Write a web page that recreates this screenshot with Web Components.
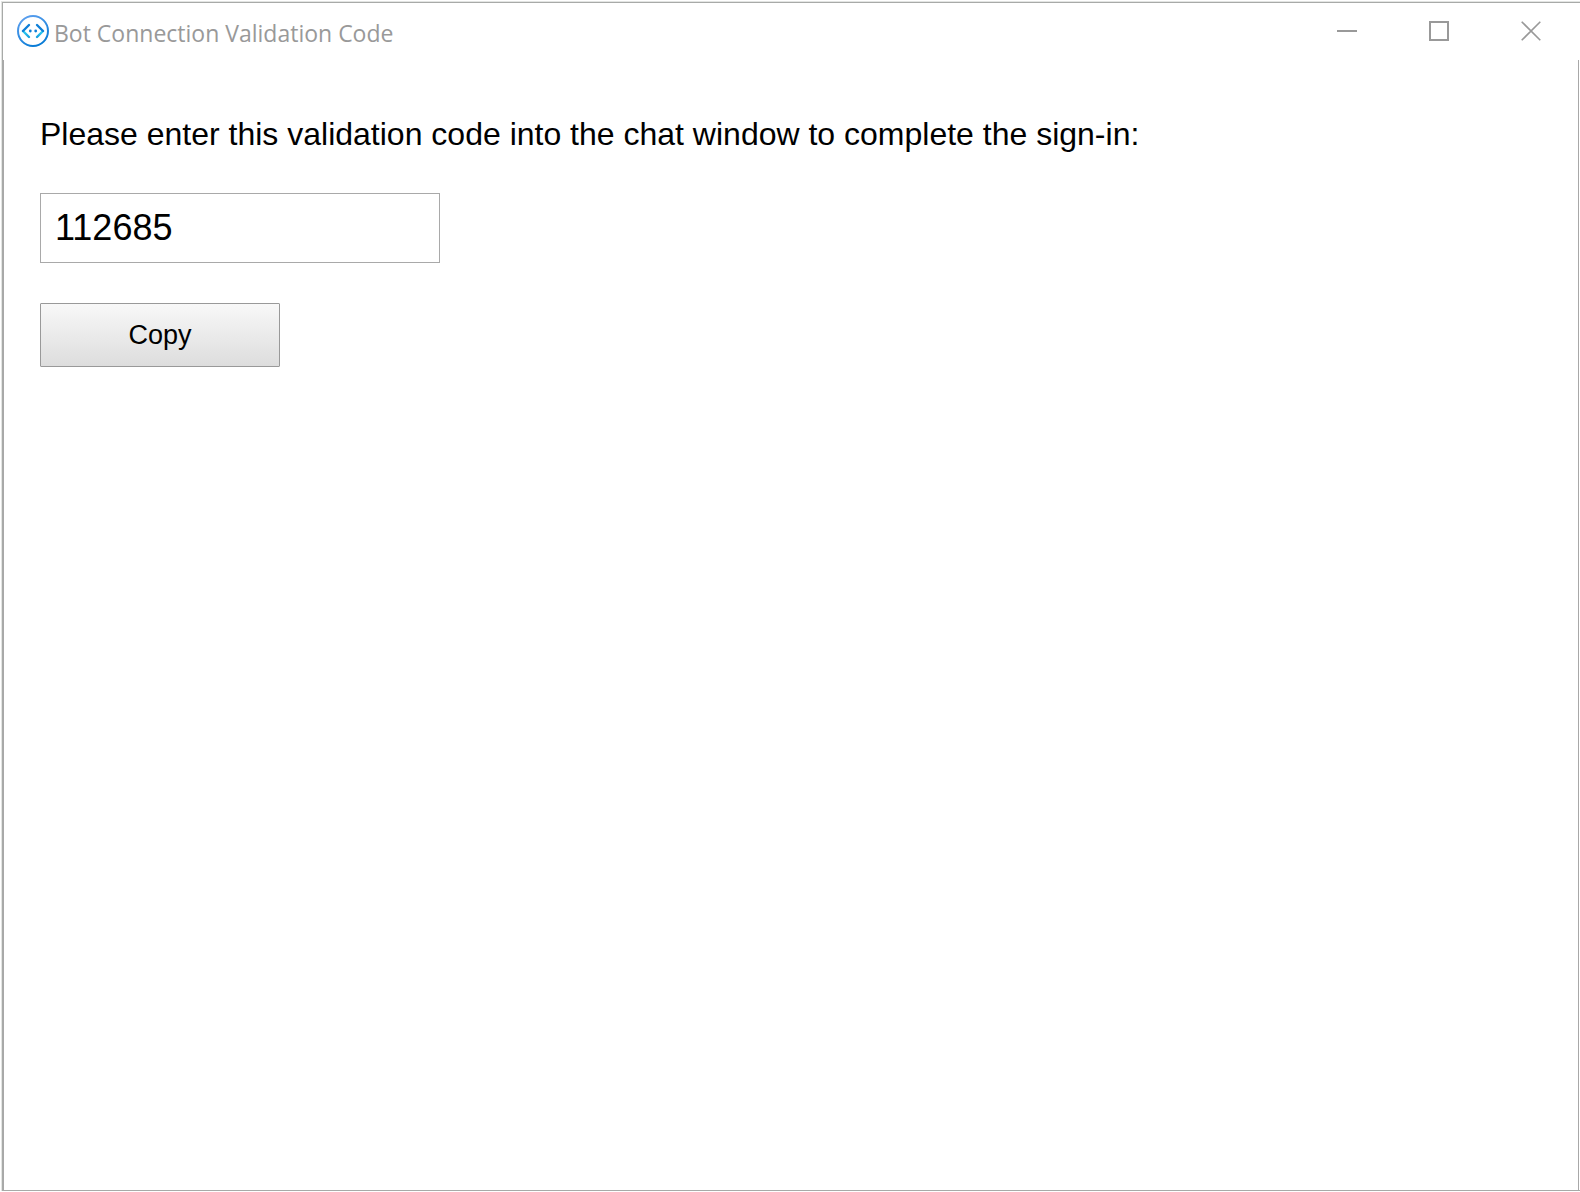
<!DOCTYPE html>
<html lang="en">
<head>
<meta charset="utf-8">
<title>Bot Connection Validation Code</title>
<style>
html, body { margin: 0; height: 100%; background: #fff; }
body { font-family: "Liberation Sans", Arial, sans-serif; color: #000; }
</style>
</head>
<body>
<app-window>
  <title-bar slot="title">Bot Connection Validation Code</title-bar>
  <validation-form code="112685">Please enter this validation code into the chat window to complete the sign-in:</validation-form>
</app-window>

<template id="app-window">
  <style>
    :host { display: flex; flex-direction: column; box-sizing: border-box; min-height: 100vh; padding: 1px 0 1px 1px; }
    .frame { flex: 1; display: flex; flex-direction: column; border: solid #e3e5e3; border-width: 1px 0 0 1px; }
    .inner { flex: 1; display: flex; flex-direction: column; border: solid #a8aaa8; border-width: 1px 0 1px 1px; }
    main { flex: 1; margin-right: 1px; border: solid #a8a8a8; border-width: 0 1px; }
  </style>
  <div class="frame"><div class="inner">
    <slot name="title"></slot>
    <main><slot></slot></main>
  </div></div>
</template>

<template id="title-bar">
  <style>
    :host { display: flex; align-items: center; height: 56px; padding: 0 3px 1px 14px; color: #999; }
    .logo { display: block; width: 32px; height: 32px; }
    h1 { flex: 1; margin: 0; padding: 3px 0 0 5px; font: 400 23px/32px "Open Sans", "Noto Sans", sans-serif; }
    nav { display: flex; height: 100%; }
    button { display: flex; align-items: center; justify-content: center; width: 92px; padding: 0; border: 0; background: none; color: inherit; }
    button svg { width: 20px; height: 20px; fill: none; stroke: currentColor; stroke-width: 2; }
  </style>
  <svg class="logo" viewBox="0 0 32 32" fill="none" aria-hidden="true">
    <defs>
      <linearGradient id="ring" x1="8" y1="0" x2="24" y2="32" gradientUnits="userSpaceOnUse"><stop stop-color="#5ea0ef"/><stop offset="1" stop-color="#0078d4"/></linearGradient>
      <linearGradient id="lower" x1="0" y1="16" x2="0" y2="23" gradientUnits="userSpaceOnUse"><stop stop-color="#32d4f5"/><stop offset="1" stop-color="#1298dd"/></linearGradient>
    </defs>
    <circle cx="16" cy="16" r="15" stroke="url(#ring)" stroke-width="2"/>
    <path d="m6 16 6 6M26 16l-6 6" stroke="url(#lower)" stroke-width="2.4" stroke-linecap="round"/>
    <path d="m12 10-6 6M20 10l6 6" stroke="#0f7fd8" stroke-width="2.4" stroke-linecap="round"/>
    <circle cx="13.3" cy="16" r="1.4" fill="#0f7fd8"/>
    <circle cx="18.7" cy="16" r="1.4" fill="#0f7fd8"/>
  </svg>
  <h1><slot></slot></h1>
  <nav aria-label="Window">
    <button type="button" aria-label="Minimize"><svg viewBox="0 0 20 20"><path d="M0 10h20"/></svg></button>
    <button type="button" aria-label="Maximize"><svg viewBox="0 0 20 20"><path d="M1 1h18v18H1z"/></svg></button>
    <button type="button" aria-label="Close"><svg viewBox="0 0 20 20"><path d="m.7.7 18.6 18.6M19.3.7.7 19.3" stroke-width="1.6"/></svg></button>
  </nav>
</template>

<template id="validation-form">
  <style>
    :host { display: block; padding: 56px 36px; }
    form { display: flex; flex-direction: column; align-items: flex-start; }
    label { font-size: 32px; line-height: 37px; margin-bottom: 40px; }
    input { box-sizing: border-box; width: 400px; max-width: 100%; height: 70px; padding: 0 14px; border: 1px solid #a9a9a9; border-radius: 0; background: #fff; color: #000; font: 36px "Liberation Sans", Arial, sans-serif; margin: 0 0 40px; outline: 0; }
    button { width: 240px; height: 64px; padding: 0; border: 1px solid #999; border-radius: 1px; background: linear-gradient(#f8f8f8, #ddd); color: #000; font: 27px "Liberation Sans", Arial, sans-serif; }
  </style>
  <form>
    <label for="code"><slot></slot></label>
    <input id="code" type="text" readonly>
    <button type="button">Copy</button>
  </form>
</template>

<script>
class TemplateElement extends HTMLElement {
  constructor() {
    super();
    const template = document.getElementById(this.localName);
    this.attachShadow({ mode: "open" }).append(template.content.cloneNode(true));
  }
}
customElements.define("app-window", class extends TemplateElement {});
customElements.define("title-bar", class extends TemplateElement {});
customElements.define("validation-form", class extends TemplateElement {
  connectedCallback() {
    const input = this.shadowRoot.querySelector("input");
    input.value = this.getAttribute("code");
    this.shadowRoot.querySelector("button").addEventListener("click", () => {
      input.select();
      document.execCommand("copy");
    });
  }
});
</script>
</body>
</html>
